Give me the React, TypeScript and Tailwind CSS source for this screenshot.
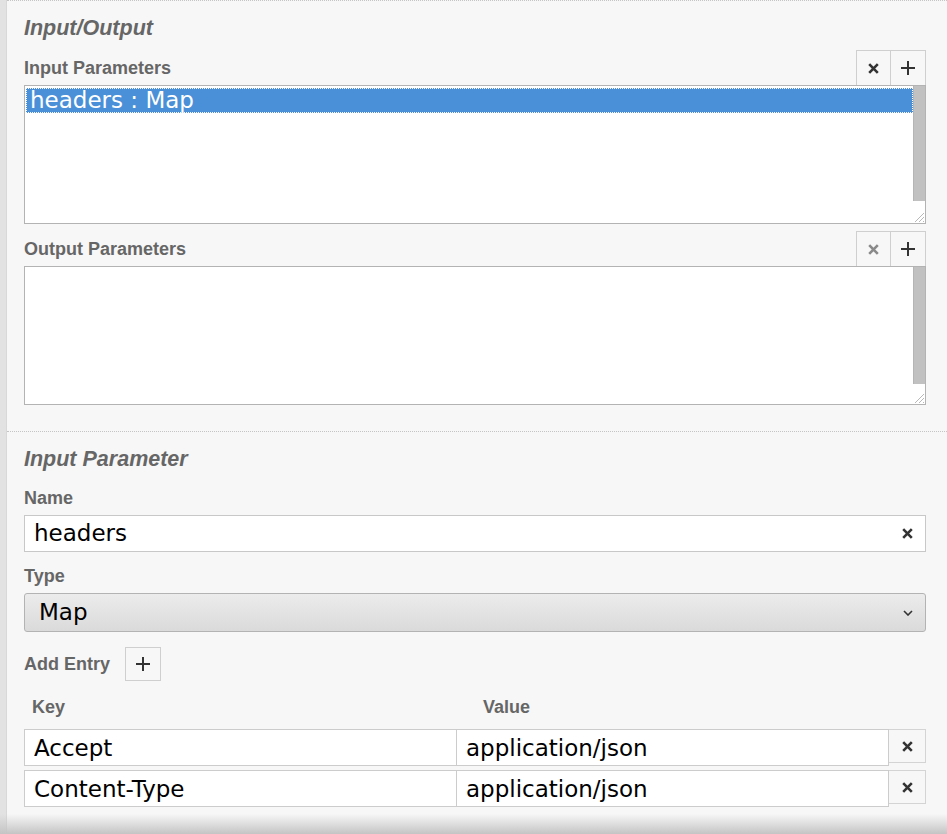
import React from 'react';

const XIcon = ({ color = '#333', size = 11 }: { color?: string; size?: number }) => (
    <svg width={size} height={size} viewBox="0 0 11 11">
        <path d="M1.2 1.2 L9.8 9.8 M9.8 1.2 L1.2 9.8" stroke={color} strokeWidth="2.6" strokeLinecap="butt" />
    </svg>
);

const PlusIcon = ({ color = '#333' }: { color?: string }) => (
    <svg width="14" height="14" viewBox="0 0 14 14">
        <path d="M7 0 V14 M0 7 H14" stroke={color} strokeWidth="2" />
    </svg>
);

const Grip = () => (
    <svg className="absolute right-0 bottom-0" width="13" height="13" viewBox="0 0 13 13">
        <path d="M12 3 L3 12 M12 7 L7 12 M12 11 L11 12" stroke="#b8b8b8" strokeWidth="1" />
    </svg>
);

// toolbar row with label on the left and remove/add buttons on the right
function ListHeader({ label, removeDisabled }: { label: string; removeDisabled?: boolean }) {
    return (
        <div className="flex items-end justify-between h-[35px]">
            <span className="mb-[7px] text-[18px] leading-[20px] font-bold text-[#666]">{label}</span>
            <div className="flex h-[35px]">
                <button className="w-[35px] h-[35px] border border-b-0 border-[#cfcfcf] bg-[#f7f7f7] flex items-center justify-center">
                    <XIcon color={removeDisabled ? '#8a8a8a' : '#333'} />
                </button>
                <button className="w-[35px] h-[35px] border border-l-0 border-b-0 border-[#cfcfcf] bg-[#f7f7f7] flex items-center justify-center">
                    <PlusIcon />
                </button>
            </div>
        </div>
    );
}

function ListBox({ items, thumbHeight }: { items: string[]; thumbHeight: number }) {
    return (
        <div className="relative flex h-[139px] border border-[#b3b3b3] bg-white">
            <div className="flex-1 pt-[2px] pl-[1px]">
                {items.map((item) => (
                    <div key={item} className="h-[25px] bg-[#4a90d9] border border-dotted border-white pl-[3px] flex items-center text-white font-['DejaVu_Sans',sans-serif] text-[23px] leading-[25px]">
                        {item}
                    </div>
                ))}
            </div>
            <div className="w-[12px]">
                <div className="bg-[#c1c1c1] border-l border-[#b5b5b5]" style={{ height: thumbHeight }} />
            </div>
            <Grip />
        </div>
    );
}

export default function App() {
    const entries = [
        { key: 'Accept', value: 'application/json' },
        { key: 'Content-Type', value: 'application/json' },
    ];

    return (
        <div className="relative w-[947px] h-[834px] flex bg-[#f7f7f7] font-['Liberation_Sans',Arial,sans-serif] overflow-hidden">
            <div className="w-[7px] bg-[#e2e2e2] border-r border-[#d8d8d8]" />
            <div className="flex-1 flex flex-col">
                {/* Input/Output */}
                <section className="border-t border-dotted border-[#c4c4c4] pl-[17px] pr-[21px] pt-[15px] pb-[26px]">
                    <h2 className="text-[21.5px] leading-[24px] font-bold italic text-[#666]">Input/Output</h2>
                    <div className="mt-[10px]">
                        <ListHeader label="Input Parameters" />
                        <ListBox items={['headers : Map']} thumbHeight={115} />
                    </div>
                    <div className="mt-[7px]">
                        <ListHeader label="Output Parameters" removeDisabled />
                        <ListBox items={[]} thumbHeight={117} />
                    </div>
                </section>

                {/* Input Parameter details */}
                <section className="border-t border-dotted border-[#c4c4c4] pl-[17px] pr-[21px] pt-[15px]">
                    <h2 className="text-[21.5px] leading-[24px] font-bold italic text-[#666]">Input Parameter</h2>

                    <div className="mt-[17px] text-[18px] leading-[20px] font-bold text-[#666]">Name</div>
                    <div className="mt-[7px] h-[37px] border border-[#c8c8c8] bg-white flex items-center pl-[9px] pr-[12px]">
                        <input
                            readOnly
                            defaultValue="headers"
                            className="flex-1 outline-none bg-transparent text-black font-['DejaVu_Sans',sans-serif] text-[23px]"
                        />
                        <XIcon />
                    </div>

                    <div className="mt-[14px] text-[18px] leading-[20px] font-bold text-[#666]">Type</div>
                    <div className="mt-[7px] h-[39px] rounded-[3px] border border-[#b3b3b3] bg-gradient-to-b from-[#ececec] to-[#dadada] flex items-center pl-[14px] pr-[12px]">
                        <span className="flex-1 text-black font-['DejaVu_Sans',sans-serif] text-[23px]">Map</span>
                        <svg width="10" height="6" viewBox="0 0 10 6">
                            <path d="M1 1 L5 5 L9 1" stroke="#333" strokeWidth="1.6" fill="none" />
                        </svg>
                    </div>

                    <div className="mt-[15px] flex items-center gap-[15px]">
                        <span className="text-[18px] leading-[20px] font-bold text-[#666]">Add Entry</span>
                        <button className="w-[36px] h-[34px] border border-[#cfcfcf] flex items-center justify-center">
                            <PlusIcon />
                        </button>
                    </div>

                    <div className="mt-[16px] flex text-[18px] leading-[20px] font-bold text-[#666]">
                        <span className="w-[459px] pl-[8px]">Key</span>
                        <span>Value</span>
                    </div>

                    <div className="mt-[12px] flex flex-col gap-[4px]">
                        {entries.map((e) => (
                            <div key={e.key} className="flex items-start">
                                <input
                                    readOnly
                                    defaultValue={e.key}
                                    className="w-[433px] h-[37px] border border-[#cccccc] bg-white pl-[9px] outline-none text-black font-['DejaVu_Sans',sans-serif] text-[23px]"
                                />
                                <input
                                    readOnly
                                    defaultValue={e.value}
                                    className="w-[432px] h-[37px] border border-l-0 border-[#cccccc] bg-white pl-[9px] outline-none text-black font-['DejaVu_Sans',sans-serif] text-[23px]"
                                />
                                <button className="w-[37px] h-[34px] border border-l-0 border-[#d4d4d4] flex items-center justify-center">
                                    <XIcon />
                                </button>
                            </div>
                        ))}
                    </div>
                </section>
            </div>
            {/* bottom scroll shadow */}
            <div className="absolute inset-x-0 bottom-0 h-[20px] bg-gradient-to-b from-[#f7f7f700] to-[#c4c4c4]" />
        </div>
    );
}
